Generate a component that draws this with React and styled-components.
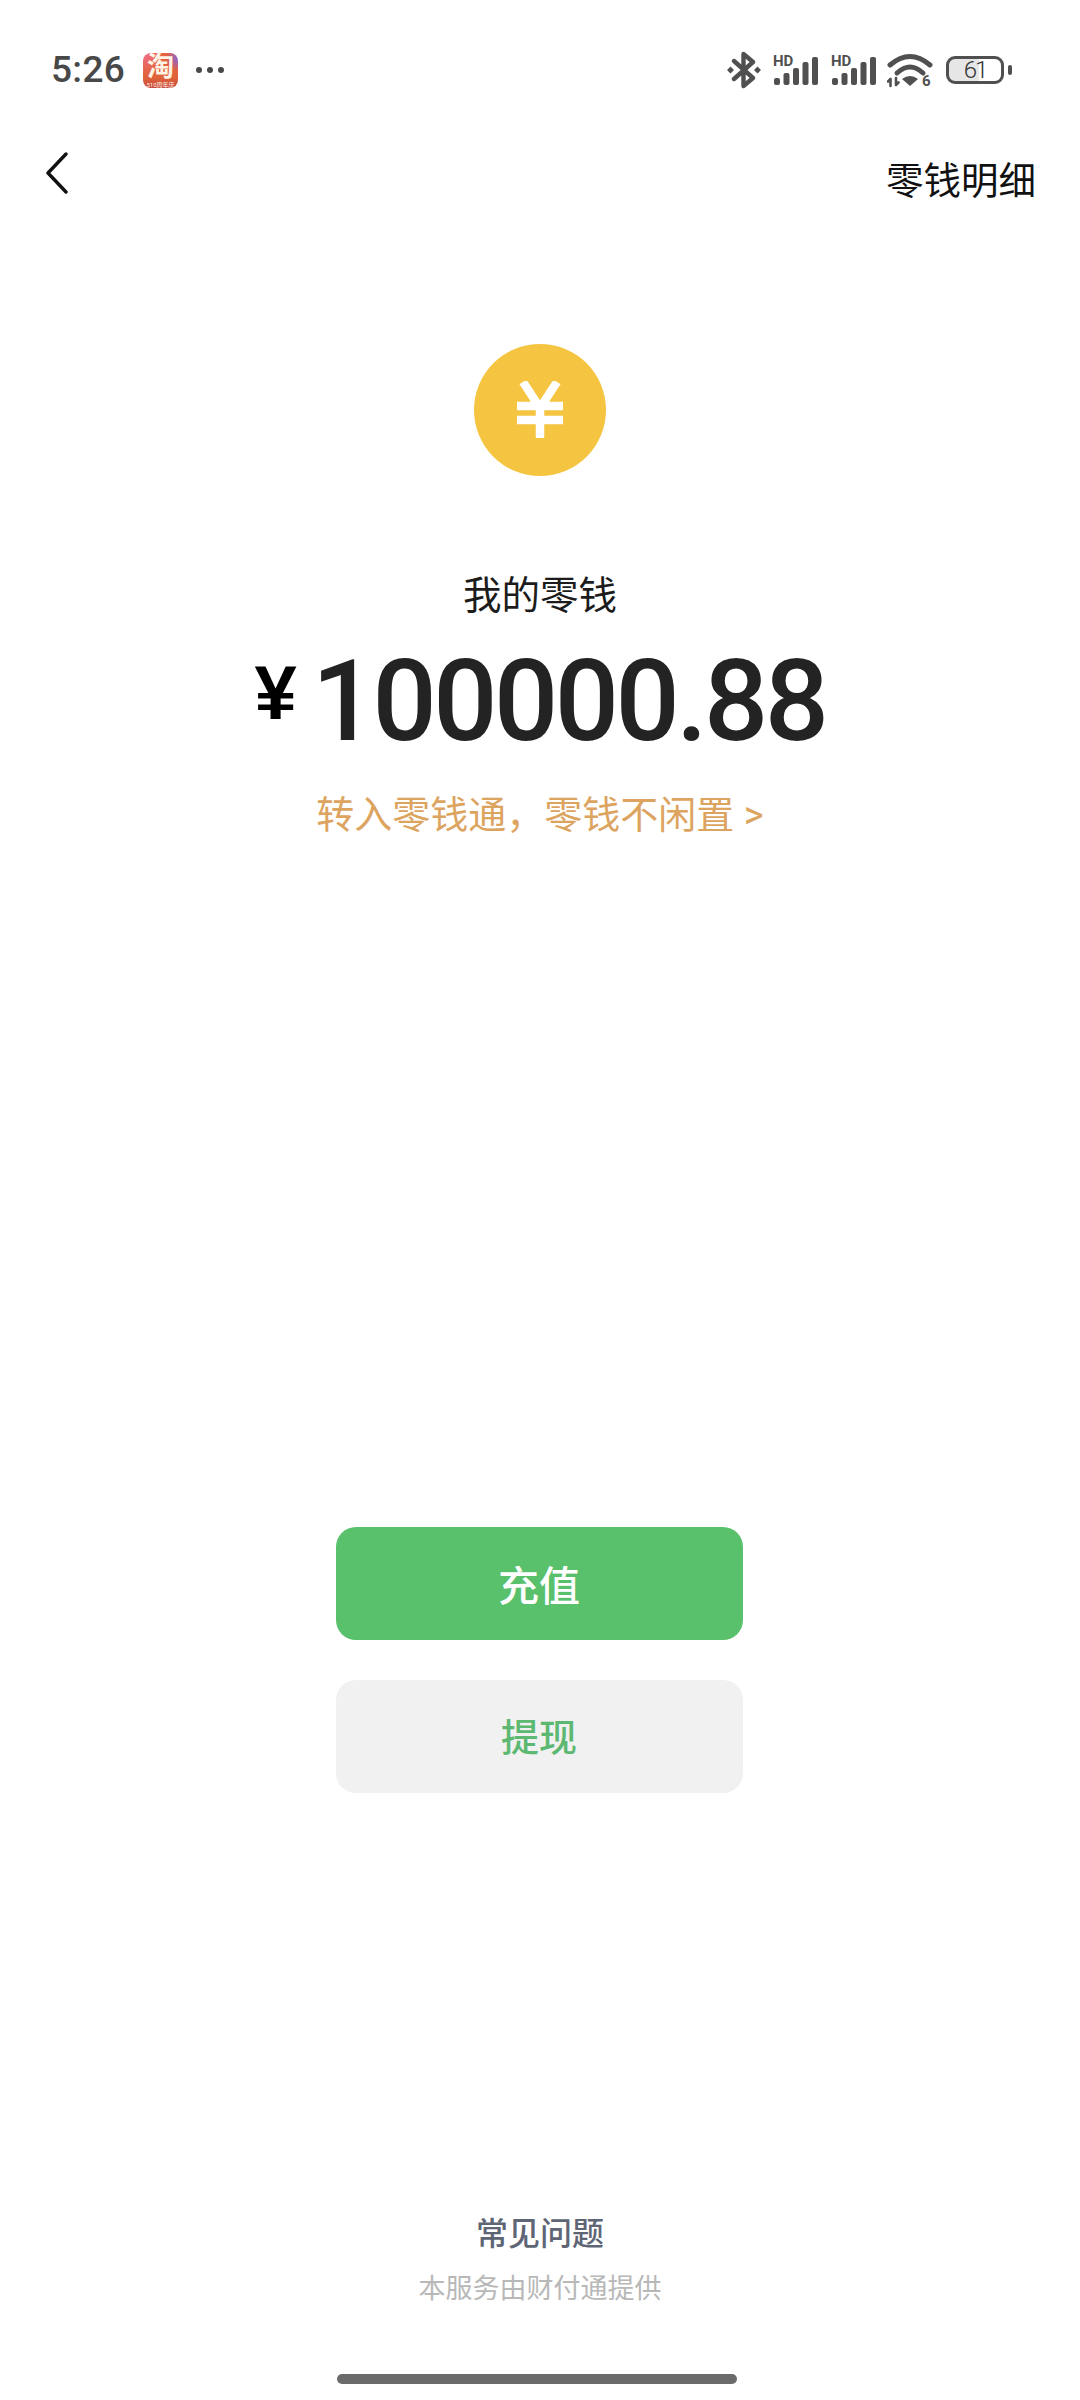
import React from 'react';
import styled, { createGlobalStyle } from 'styled-components';

const GlobalStyle = createGlobalStyle`
  html, body {
    margin: 0;
    padding: 0;
    background: #fff;
  }
  body {
    font-family: "Roboto", "Noto Sans CJK SC", sans-serif;
  }
`;

const Page = styled.div`
  width: 1080px;
  height: 2400px;
  overflow: hidden;
  display: flex;
  flex-direction: column;
  background: #fff;
`;

const StatusBar = styled.div`
  height: 70px;
  padding: 35px 68px 0 51px;
  display: flex;
  align-items: center;
  justify-content: space-between;
  color: #484848;
`;

const StatusLeft = styled.div`
  display: flex;
  align-items: center;
`;

const Time = styled.span`
  font-size: 37px;
  line-height: 40px;
  font-weight: 500;
  letter-spacing: 0.3px;
`;

const AppBadge = styled.div`
  width: 35px;
  height: 35px;
  margin-left: 18px;
  border-radius: 8px;
  display: flex;
  flex-direction: column;
  align-items: center;
  color: #fff3e4;
  background:
    radial-gradient(circle at 100% 15%, #8a62d8 0%, rgba(138, 98, 216, 0) 28%),
    radial-gradient(circle at 0% 0%, #ee6f8c 0%, rgba(238, 111, 140, 0) 45%),
    linear-gradient(180deg, #e8623a 0%, #e0643a 70%, #c7473c 100%);
`;

const BadgeChar = styled.span`
  font-size: 27px;
  line-height: 28px;
  font-weight: 700;
`;

const BadgeCaption = styled.span`
  font-size: 6px;
  line-height: 7px;
  white-space: nowrap;
`;

const Dots = styled.div`
  margin-left: 18px;
  display: flex;
  gap: 5px;
`;

const Dot = styled.i`
  width: 6px;
  height: 6px;
  border-radius: 50%;
  background: #484848;
`;

const StatusRight = styled.div`
  display: flex;
  align-items: center;
`;

const Glyph = styled.svg`
  display: block;
  flex: none;
  margin-left: ${(p) => p.$gap || 0}px;
`;

const Battery = styled.div`
  margin-left: 13px;
  display: flex;
  align-items: center;
  gap: 4px;
`;

const BatteryBody = styled.div`
  width: 58px;
  height: 28px;
  box-sizing: border-box;
  border: 3px solid #505050;
  border-radius: 9px;
  display: flex;
  align-items: center;
  justify-content: center;
  font-size: 24px;
  font-weight: 300;
  letter-spacing: -2px;
  color: #333;
  background: linear-gradient(90deg, #e6e6e6 0%, #e6e6e6 58%, #fff 58%);
`;

const BatteryCap = styled.i`
  width: 4px;
  height: 10px;
  border-radius: 2px;
  background: #505050;
`;

const NavBar = styled.div`
  margin-top: 38px;
  padding: 0 44px 0 45px;
  height: 60px;
  display: flex;
  align-items: center;
  justify-content: space-between;
`;

const NavTitle = styled.span`
  font-size: 37.5px;
  line-height: 44px;
  color: #111;
  margin-top: 16px;
`;

const Hero = styled.div`
  margin-top: 141px;
  display: flex;
  flex-direction: column;
  align-items: center;
`;

const Coin = styled.div`
  width: 132px;
  height: 132px;
  border-radius: 50%;
  background: #f5c440;
  display: flex;
  align-items: center;
  justify-content: center;
`;

const HeroLabel = styled.div`
  margin-top: 96px;
  font-size: 38.5px;
  line-height: 48px;
  color: #1c1c1c;
`;

const Amount = styled.div`
  margin-top: 25px;
  height: 114px;
  display: flex;
  align-items: flex-start;
  color: #232323;
`;

const Currency = styled.span`
  font-family: "Liberation Sans", sans-serif;
  font-size: 76px;
  line-height: 76px;
  font-weight: 700;
  color: #000;
  margin-top: 10px;
  margin-right: 15px;
`;

const Digits = styled.span`
  font-size: 113px;
  line-height: 114px;
  font-weight: 500;
  letter-spacing: -3.5px;
`;

const PromoLink = styled.div`
  margin-top: 32px;
  font-size: 38px;
  line-height: 48px;
  color: #dca45f;
`;

const Actions = styled.div`
  margin-top: 688px;
  padding-right: 2px;
  display: flex;
  flex-direction: column;
  align-items: center;
  gap: 40px;
`;

const ActionButton = styled.div`
  width: 407px;
  height: 113px;
  box-sizing: border-box;
  padding-bottom: ${(p) => (p.$primary ? 2 : 4)}px;
  border-radius: 20px;
  display: flex;
  align-items: center;
  justify-content: center;
  font-size: ${(p) => (p.$primary ? 41 : 38)}px;
  font-weight: 500;
  background: ${(p) => (p.$primary ? '#59c06c' : '#f1f1f1')};
  color: ${(p) => (p.$primary ? '#fff' : '#5db872')};
`;

const Footer = styled.div`
  margin-top: auto;
  display: flex;
  flex-direction: column;
  align-items: center;
`;

const FaqLink = styled.div`
  font-size: 32px;
  line-height: 40px;
  font-weight: 500;
  color: #5e6575;
`;

const Provider = styled.div`
  margin-top: 16px;
  font-size: 27px;
  line-height: 38px;
  color: #b8b8b8;
`;

const HomeBar = styled.div`
  margin-top: 66px;
  margin-bottom: 16px;
  margin-right: 6px;
  width: 400px;
  height: 10px;
  border-radius: 5px;
  background: #6b6b6b;
`;

const Bluetooth = () => (
  <Glyph width="34" height="38" viewBox="0 0 34 38" fill="none">
    <path d="M7 10 L26 27 L16.5 35 V3 L26 11 L7 28" stroke="#505050" strokeWidth="4.4" strokeLinejoin="round" strokeLinecap="round" />
    <path d="M0 19 L3.5 15.5 L7 19 L3.5 22.5 Z M27 19 L30.5 15.5 L34 19 L30.5 22.5 Z" fill="#505050" />
  </Glyph>
);

const SIGNAL_BARS = [
  [1, 26, 7],
  [10.5, 21, 12],
  [20, 16, 17],
  [29.5, 10, 23],
  [39, 5, 28],
];

const Signal = ({ gap }) => (
  <Glyph $gap={gap} width="46" height="40" viewBox="0 -2 46 40">
    <text x="0" y="13.5" fontFamily="Roboto, sans-serif" fontWeight="700" fontSize="15" fill="#505050">HD</text>
    {SIGNAL_BARS.map(([x, y, h]) => (
      <rect key={x} x={x} y={y} width="6" height={h} rx="2" fill="#505050" />
    ))}
  </Glyph>
);

const Wifi = () => (
  <Glyph $gap={10} width="46" height="40" viewBox="0 -2 46 40" fill="none">
    <path d="M3 13 Q23 -4 43 13" stroke="#505050" strokeWidth="5" strokeLinecap="round" />
    <path d="M10 21 Q23 9 36 21" stroke="#505050" strokeWidth="5" strokeLinecap="round" />
    <path d="M15 27 Q23 21 31 27 L23 34 Z" fill="#505050" />
    <path d="M3.5 34 V27 M1 29.5 L3.5 27 M9 26 V33 M9 33 L11.5 30.5" stroke="#505050" strokeWidth="2.6" strokeLinecap="round" />
    <text x="35" y="34" fontFamily="Roboto, sans-serif" fontWeight="700" fontSize="15" fill="#505050">6</text>
  </Glyph>
);

export default function App() {
  return (
    <Page>
      <GlobalStyle />
      <StatusBar>
        <StatusLeft>
          <Time>5:26</Time>
          <AppBadge>
            <BadgeChar>淘</BadgeChar>
            <BadgeCaption>510周年庆</BadgeCaption>
          </AppBadge>
          <Dots>
            <Dot />
            <Dot />
            <Dot />
          </Dots>
        </StatusLeft>
        <StatusRight>
          <Bluetooth />
          <Signal gap={12} />
          <Signal gap={12} />
          <Wifi />
          <Battery>
            <BatteryBody>61</BatteryBody>
            <BatteryCap />
          </Battery>
        </StatusRight>
      </StatusBar>

      <NavBar>
        <svg width="24" height="42" viewBox="0 0 24 42" fill="none">
          <path d="M21 2 L3 21 L21 40" stroke="#111" strokeWidth="3.4" strokeLinecap="round" strokeLinejoin="round" />
        </svg>
        <NavTitle>零钱明细</NavTitle>
      </NavBar>

      <Hero>
        <Coin>
          <svg width="48" height="58" viewBox="0 0 48 58" fill="none">
            <path d="M7 1 L24 27 L41 1 M24 27 V57 M1 25 H47 M1 39 H47" stroke="#fff" strokeWidth="8.5" />
          </svg>
        </Coin>
        <HeroLabel>我的零钱</HeroLabel>
        <Amount>
          <Currency>¥</Currency>
          <Digits>100000.88</Digits>
        </Amount>
        <PromoLink>转入零钱通，零钱不闲置 &gt;</PromoLink>
      </Hero>

      <Actions>
        <ActionButton $primary>充值</ActionButton>
        <ActionButton>提现</ActionButton>
      </Actions>

      <Footer>
        <FaqLink>常见问题</FaqLink>
        <Provider>本服务由财付通提供</Provider>
        <HomeBar />
      </Footer>
    </Page>
  );
}
